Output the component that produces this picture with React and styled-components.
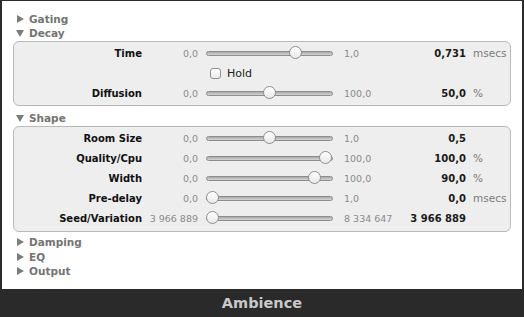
import React from "react";
import styled, { createGlobalStyle } from "styled-components";

const GlobalStyle = createGlobalStyle`
  html, body {
    margin: 0;
    padding: 0;
    background: #ffffff;
  }
  body {
    font-family: "DejaVu Sans", "Liberation Sans", sans-serif;
  }
`;

const Window = styled.div`
  width: 524px;
  height: 317px;
  box-sizing: border-box;
  display: flex;
  flex-direction: column;
  background: #ffffff;
  border: 2px solid #2b2b2b;
  border-top-width: 1px;
  border-bottom: none;
`;

const Content = styled.div`
  flex: 1;
  padding: 11px 11px 0 11px;
  display: flex;
  flex-direction: column;
`;

const SectionHeader = styled.div`
  height: 14px;
  display: flex;
  align-items: center;
  padding-left: 3px;
  font-size: 10.5px;
  font-weight: bold;
  color: #747474;
  margin-top: ${(p) => p.$gap || 0}px;
`;

const Arrow = styled.span`
  width: 0;
  height: 0;
  margin-right: 5px;
  ${(p) =>
    p.$open
      ? `
    border-left: 4px solid transparent;
    border-right: 4px solid transparent;
    border-top: 7px solid #7c7c7c;
    margin-top: 1px;
  `
      : `
    border-top: 4px solid transparent;
    border-bottom: 4px solid transparent;
    border-left: 7px solid #7c7c7c;
    margin-left: 1px;
  `}
`;

const Panel = styled.div`
  margin-top: 1px;
  border: 1px solid #b9b9b9;
  border-radius: 6px;
  background: #eeeeee;
  padding: 1px 0 ${(p) => p.$bottom || 2}px 0;
`;

const Row = styled.div`
  height: 20px;
  display: grid;
  grid-template-columns: 128px 56px 143px 59px 66px 1fr;
  align-items: center;
`;

const Label = styled.div`
  text-align: right;
  font-size: 10px;
  font-weight: bold;
  color: #111;
`;

const Bound = styled.div`
  font-size: 9.5px;
  color: #8a8a8a;
  text-align: ${(p) => (p.$left ? "left" : "right")};
  white-space: nowrap;
`;

const Track = styled.div`
  position: relative;
  margin-left: 8px;
  width: 127px;
  height: 5px;
  box-sizing: border-box;
  border: 1px solid #8d8d8d;
  border-radius: 3px;
  background: linear-gradient(#a9a9a9, #d6d6d6);
`;

const Thumb = styled.div`
  position: absolute;
  top: 50%;
  width: 13px;
  height: 13px;
  margin-left: -7px;
  margin-top: -7px;
  box-sizing: border-box;
  border: 1px solid #8f8f8f;
  border-radius: 50%;
  background: linear-gradient(#ffffff, #e9e9e9);
`;

const Value = styled.div`
  text-align: right;
  font-size: 10px;
  font-weight: bold;
  color: #1a1a1a;
  white-space: nowrap;
`;

const Unit = styled.div`
  padding-left: 7px;
  font-size: 10.5px;
  color: #7a7a7a;
`;

const CheckCell = styled.label`
  grid-column: 3 / 5;
  display: flex;
  align-items: center;
  padding-left: 12px;
  font-size: 11px;
  color: #222;
`;

const Box = styled.span`
  width: 11px;
  height: 11px;
  box-sizing: border-box;
  border: 1px solid #8f8f8f;
  border-radius: 3px;
  background: linear-gradient(#ffffff, #ececec);
  margin-right: 6px;
`;

const BottomBar = styled.div`
  height: 28px;
  background: #2a2a2a;
  display: flex;
  align-items: center;
  justify-content: center;
  font-size: 14.5px;
  font-weight: bold;
  color: #c9c9c9;
  margin: 0 -2px;
  padding-bottom: 1px;
  box-sizing: border-box;
`;

const Slider = ({ label, min, max, value, unit, frac }) => (
  <Row>
    <Label>{label}</Label>
    <Bound>{min}</Bound>
    <Track>
      <Thumb style={{ left: `${6 + frac * 113}px` }} />
    </Track>
    <Bound $left>
      &nbsp;{max}
    </Bound>
    <Value>{value}</Value>
    <Unit>{unit}</Unit>
  </Row>
);

const App = () => (
  <>
    <GlobalStyle />
    <Window>
      <Content>
        <SectionHeader>
          <Arrow />
          Gating
        </SectionHeader>
        <SectionHeader>
          <Arrow $open />
          Decay
        </SectionHeader>
        <Panel>
          <Slider label="Time" min="0,0" max="1,0" value="0,731" unit="msecs" frac={0.731} />
          <Row>
            <div />
            <div />
            <CheckCell>
              <Box />
              Hold
            </CheckCell>
          </Row>
          <Slider label="Diffusion" min="0,0" max="100,0" value="50,0" unit="%" frac={0.5} />
        </Panel>
        <SectionHeader $gap={5}>
          <Arrow $open />
          Shape
        </SectionHeader>
        <Panel $bottom={3}>
          <Slider label="Room Size" min="0,0" max="1,0" value="0,5" unit="" frac={0.5} />
          <Slider label="Quality/Cpu" min="0,0" max="100,0" value="100,0" unit="%" frac={1} />
          <Slider label="Width" min="0,0" max="100,0" value="90,0" unit="%" frac={0.9} />
          <Slider label="Pre-delay" min="0,0" max="1,0" value="0,0" unit="msecs" frac={0} />
          <Slider
            label="Seed/Variation"
            min="3 966 889"
            max="8 334 647"
            value="3 966 889"
            unit=""
            frac={0}
          />
        </Panel>
        <SectionHeader $gap={3}>
          <Arrow />
          Damping
        </SectionHeader>
        <SectionHeader $gap={1}>
          <Arrow />
          EQ
        </SectionHeader>
        <SectionHeader>
          <Arrow />
          Output
        </SectionHeader>
      </Content>
      <BottomBar>Ambience</BottomBar>
    </Window>
  </>
);

export default App;
